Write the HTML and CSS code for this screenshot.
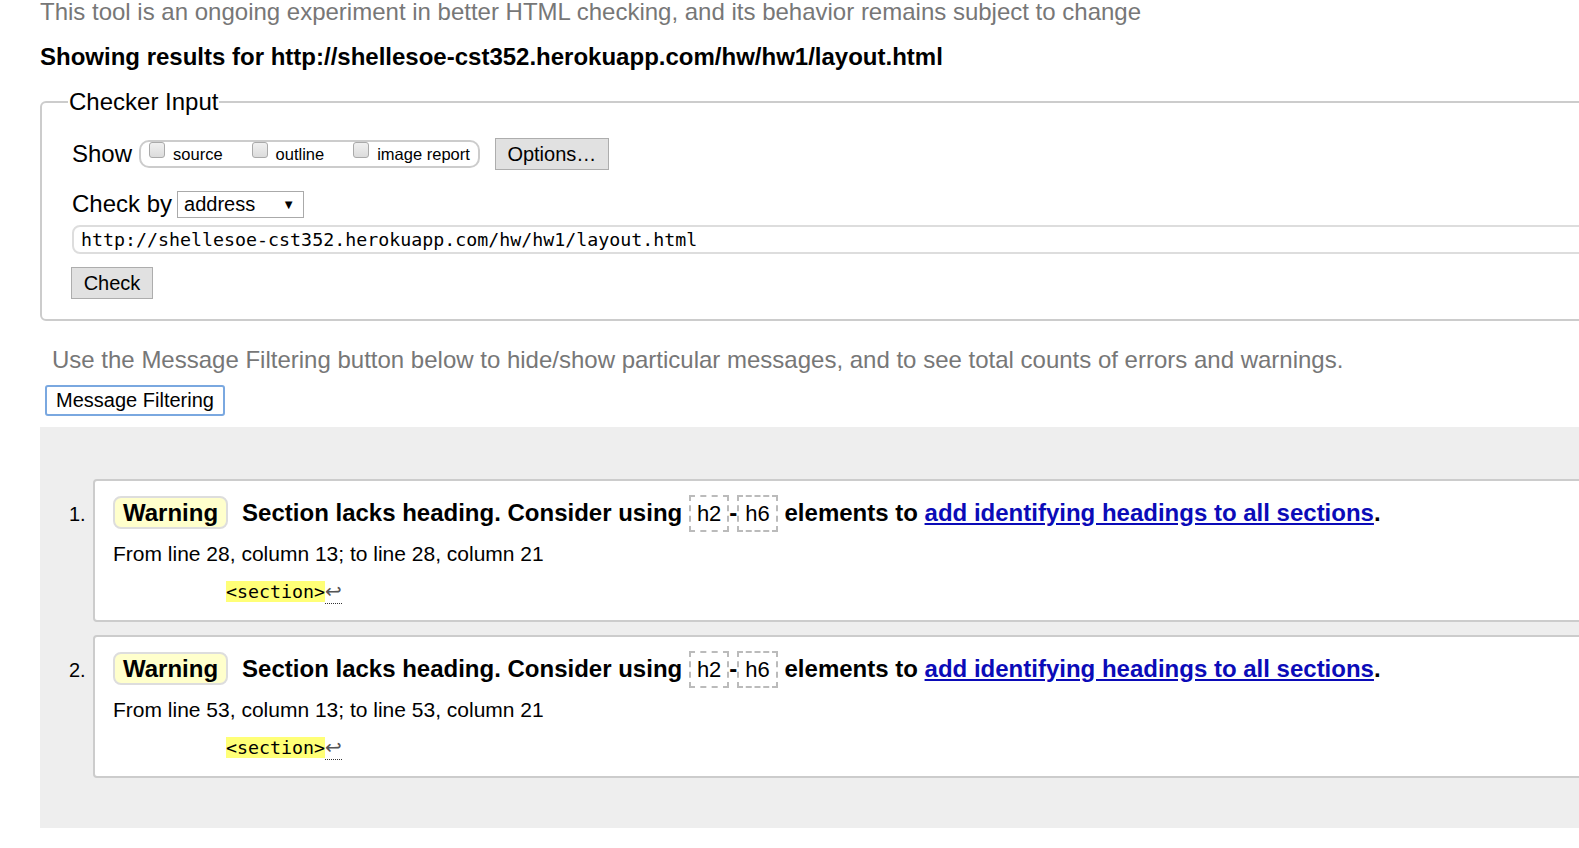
FILE: index.html
```html
<!DOCTYPE html>
<html>
<head>
<meta charset="utf-8">
<link rel="stylesheet" href="styles.css">
</head>
<body>
<div class="page">
  <p class="intro">This tool is an ongoing experiment in better HTML checking, and its behavior remains subject to change</p>
  <h2 class="results">Showing results for http://shellesoe-cst352.herokuapp.com/hw/hw1/layout.html</h2>
  <fieldset class="checker">
    <legend>Checker Input</legend>
    <div class="row show-row">
      <span class="lbl">Show</span>
      <span class="group">
        <label class="cb"><span class="box"></span>source</label>
        <label class="cb"><span class="box"></span>outline</label>
        <label class="cb"><span class="box"></span>image report</label>
      </span>
      <span class="btn options">Options…</span>
    </div>
    <div class="row by-row">
      <span class="lbl">Check by</span>
      <span class="select">address<span class="arrow">▼</span></span>
    </div>
    <div class="url">http://shellesoe-cst352.herokuapp.com/hw/hw1/layout.html</div>
    <div class="btn check">Check</div>
  </fieldset>
  <p class="filter-note">Use the Message Filtering button below to hide/show particular messages, and to see total counts of errors and warnings.</p>
  <div class="btn filter">Message Filtering</div>
  <div class="results-area">
    <ol class="msgs">
      <li class="msg">
        <span class="num">1.</span>
        <div class="card">
          <p class="title"><span class="badge">Warning</span><span class="text">Section lacks heading. Consider using <code class="el">h2</code>-<code class="el">h6</code> elements to <a href="#">add identifying headings to all sections</a>.</span></p>
          <p class="loc">From line 28, column 13; to line 28, column 21</p>
          <p class="extract"><span class="hl">&lt;section&gt;</span><span class="ret">↩</span></p>
        </div>
      </li>
      <li class="msg">
        <span class="num">2.</span>
        <div class="card">
          <p class="title"><span class="badge">Warning</span><span class="text">Section lacks heading. Consider using <code class="el">h2</code>-<code class="el">h6</code> elements to <a href="#">add identifying headings to all sections</a>.</span></p>
          <p class="loc">From line 53, column 13; to line 53, column 21</p>
          <p class="extract"><span class="hl">&lt;section&gt;</span><span class="ret">↩</span></p>
        </div>
      </li>
    </ol>
  </div>
</div>
</body>
</html>
```
FILE: styles.css
```css
html, body {
  margin: 0;
  padding: 0;
  background: #fff;
  overflow: hidden;
}
body {
  font-family: "Liberation Sans", Arial, sans-serif;
  color: #000;
}
.page {
  padding-left: 40px;
  width: 1600px;
}
.intro {
  margin: -3px 0 0 0;
  font-size: 24px;
  line-height: 30px;
  color: #777;
}
.results {
  margin: 15px 0 0 0;
  font-size: 24px;
  line-height: 30px;
  font-weight: bold;
}
.checker {
  margin: 16px 0 0 0;
  border: 2px solid #ccc;
  border-radius: 6px;
  padding: 0 0 20px 30px;
}
.checker legend {
  font-size: 24px;
  line-height: 28px;
  padding: 0 1px;
  margin-left: -4px;
}
.row {
  display: flex;
  align-items: center;
}
.lbl {
  font-size: 24px;
}
.show-row {
  margin-top: 22px;
}
.group {
  display: flex;
  align-items: center;
  margin-left: 7px;
  border: 2px solid #ccc;
  border-radius: 10px;
  height: 24px;
  padding: 0 8px 0 8px;
}
.cb {
  display: flex;
  align-items: center;
  font-size: 16.5px;
  margin-right: 29px;
  color: #000;
}
.cb:last-child { margin-right: 0; }
.box {
  width: 14px;
  height: 14px;
  border: 1px solid #aaa;
  border-radius: 3px;
  background: linear-gradient(#f0f0f0, #dcdcdc);
  margin-right: 8px;
  position: relative;
  top: -4px;
}
.btn {
  display: inline-block;
  font-size: 20px;
  border: 1px solid #adadad;
  background: #e1e1e1;
  color: #000;
  box-sizing: border-box;
  text-align: center;
}
.options {
  margin-left: 15px;
  width: 114px;
  height: 32px;
  line-height: 30px;
}
.by-row {
  margin-top: 20px;
}
.select {
  margin-left: 5px;
  width: 127px;
  height: 27px;
  box-sizing: border-box;
  border: 1px solid #aaa;
  font-size: 20px;
  line-height: 25px;
  padding-left: 6px;
  display: flex;
  justify-content: space-between;
}
.arrow {
  font-size: 13px;
  padding-right: 8px;
}
.url {
  margin-top: 7px;
  height: 29px;
  box-sizing: border-box;
  border: 2px solid #ddd;
  border-radius: 8px;
  font-family: "DejaVu Sans Mono", monospace;
  font-size: 18.3px;
  line-height: 25px;
  padding-left: 7px;
  color: #000;
}
.check {
  display: block;
  margin-top: 13px;
  width: 82px;
  height: 32px;
  line-height: 30px;
  margin-left: -1px;
}
.filter-note {
  margin: 24px 0 0 12px;
  font-size: 24px;
  line-height: 30px;
  color: #777;
}
.filter {
  display: block;
  margin: 10px 0 0 5px;
  width: 180px;
  height: 31px;
  line-height: 27px;
  background: #fff;
  border: 2px solid #7aa8e0;
  border-radius: 3px;
}
.results-area {
  margin-top: 11px;
  background: #eee;
  padding: 52px 0 50px 0;
}
.msgs {
  list-style: none;
  margin: 0;
  padding: 0;
}
.msg {
  display: flex;
  align-items: flex-start;
  margin-bottom: 13px;
}
.msg:last-child { margin-bottom: 0; }
.num {
  width: 53px;
  box-sizing: border-box;
  padding-left: 29px;
  padding-top: 23px;
  font-size: 20px;
  line-height: 24px;
}
.card {
  flex: 1;
  background: #fff;
  border: 2px solid #ccc;
  border-radius: 4px;
  padding: 15px 0 15px 18px;
}
.card p { margin: 0; }
.title {
  display: flex;
  align-items: center;
  font-size: 24px;
  font-weight: bold;
  height: 33px;
}
.badge {
  display: inline-block;
  background: #ffffcc;
  border: 2px solid #ddd;
  border-radius: 8px;
  padding: 0 8px;
  height: 29px;
  line-height: 29px;
  margin-right: 14px;
}
.el {
  font-family: "Liberation Sans", Arial, sans-serif;
  font-weight: normal;
  border: 2px dashed #bbb;
  padding: 4px 6px;
  font-size: 22px;
}
.title a {
  color: #0b0bb8;
  text-decoration: underline;
}
.loc {
  margin-top: 13px !important;
  font-size: 21px;
  line-height: 24px;
}
.extract {
  margin-top: 12px !important;
  padding-left: 113px;
  font-family: "DejaVu Sans Mono", monospace;
  font-size: 18.3px;
  line-height: 26px;
}
.hl {
  background: #ffff77;
}
.ret {
  color: #555;
  font-family: "DejaVu Sans", sans-serif;
  font-size: 20px;
  border-bottom: 1px dotted #333;
}
```
